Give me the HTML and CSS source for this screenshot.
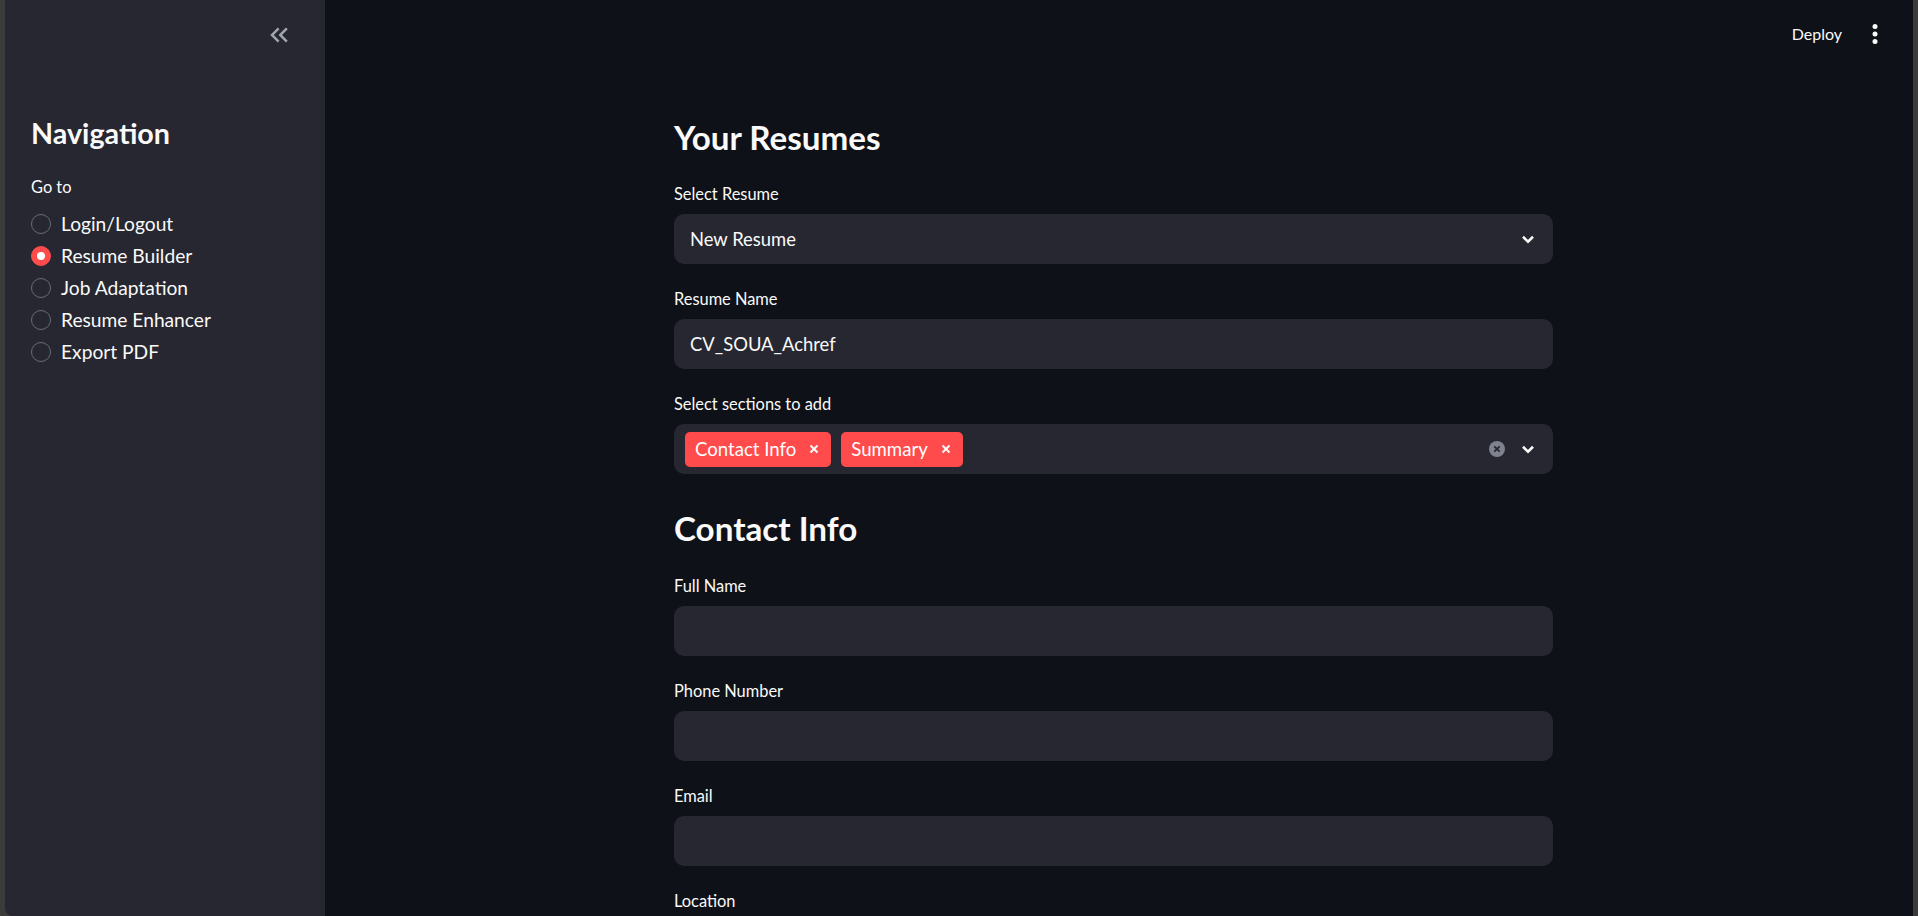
FILE: index.html
```html
<!DOCTYPE html>
<html lang="en">
<head>
<meta charset="utf-8">
<title>Resume Builder</title>
<link rel="stylesheet" href="styles.css">
</head>
<body>
<div class="window">
  <aside class="sidebar">
    <div class="sidebar-top">
      <button class="collapse-btn" aria-label="Collapse sidebar">
        <svg width="30" height="30" viewBox="0 0 24 24"><path d="M17.59 18L19 16.59 14.42 12 19 7.41 17.59 6l-6 6z M11 18l1.41-1.41L7.83 12l4.58-4.59L11 6l-6 6z" fill="currentColor"/></svg>
      </button>
    </div>
    <div class="sidebar-body">
      <h2 class="side-title">Navigation</h2>
      <div class="side-label">Go to</div>
      <ul class="radio-list">
        <li class="radio"><span class="dot"></span><span>Login/Logout</span></li>
        <li class="radio selected"><span class="dot"></span><span>Resume Builder</span></li>
        <li class="radio"><span class="dot"></span><span>Job Adaptation</span></li>
        <li class="radio"><span class="dot"></span><span>Resume Enhancer</span></li>
        <li class="radio"><span class="dot"></span><span>Export PDF</span></li>
      </ul>
    </div>
  </aside>
  <main class="main">
    <header class="topbar">
      <span class="deploy">Deploy</span>
      <span class="menu-btn">
        <svg width="30" height="30" viewBox="0 0 24 24"><circle cx="12" cy="6" r="2" fill="currentColor"/><circle cx="12" cy="12" r="2" fill="currentColor"/><circle cx="12" cy="18" r="2" fill="currentColor"/></svg>
      </span>
    </header>
    <section class="content">
      <h3 class="heading">Your Resumes</h3>
      <div class="field">
        <div class="label">Select Resume</div>
        <div class="box select">
          <span class="value">New Resume</span>
          <svg class="chev" width="14" height="9" viewBox="0 0 14 9"><path d="M2 1.8 L7 6.6 L12 1.8" fill="none" stroke="currentColor" stroke-width="2.6"/></svg>
        </div>
      </div>
      <div class="field">
        <div class="label">Resume Name</div>
        <div class="box"><span class="value">CV_SOUA_Achref</span></div>
      </div>
      <div class="field">
        <div class="label">Select sections to add</div>
        <div class="box multi">
          <div class="tags">
            <span class="tag">Contact Info<svg class="tag-x" width="10" height="10" viewBox="0 0 10 10"><path d="M1.5 1.5 L8.5 8.5 M8.5 1.5 L1.5 8.5" stroke="currentColor" stroke-width="1.9"/></svg></span>
            <span class="tag">Summary<svg class="tag-x" width="10" height="10" viewBox="0 0 10 10"><path d="M1.5 1.5 L8.5 8.5 M8.5 1.5 L1.5 8.5" stroke="currentColor" stroke-width="1.9"/></svg></span>
          </div>
          <div class="multi-icons">
            <svg class="clear" width="16" height="16" viewBox="0 0 16 16"><circle cx="8" cy="8" r="8" fill="#7f828f"/><path d="M5.3 5.3 L10.7 10.7 M10.7 5.3 L5.3 10.7" stroke="#262730" stroke-width="1.8"/></svg>
            <svg class="chev" width="14" height="9" viewBox="0 0 14 9"><path d="M2 1.8 L7 6.6 L12 1.8" fill="none" stroke="currentColor" stroke-width="2.6"/></svg>
          </div>
        </div>
      </div>
      <h3 class="heading second">Contact Info</h3>
      <div class="field">
        <div class="label">Full Name</div>
        <div class="box"></div>
      </div>
      <div class="field">
        <div class="label">Phone Number</div>
        <div class="box"></div>
      </div>
      <div class="field">
        <div class="label">Email</div>
        <div class="box"></div>
      </div>
      <div class="field">
        <div class="label">Location</div>
        <div class="box"></div>
      </div>
    </section>
  </main>
</div>
</body>
</html>
```
FILE: styles.css
```css
html, body {
  margin: 0;
  padding: 0;
  height: 916px;
  overflow: hidden;
  background: #3b3b3b;
  font-family: Lato, "Liberation Sans", sans-serif;
  color: #fafafa;
}

.window {
  display: flex;
  height: 916px;
  padding: 0 5px 0 5px;
  box-sizing: border-box;
  background: #3b3b3b;
}

.sidebar {
  width: 320px;
  flex: none;
  background: #262730;
  border-bottom-left-radius: 8px;
  display: flex;
  flex-direction: column;
}

.sidebar-top {
  height: 68px;
  display: flex;
  justify-content: flex-end;
  align-items: flex-start;
  padding: 20px 31px 0 0;
  box-sizing: border-box;
}

.collapse-btn {
  background: none;
  border: 0;
  padding: 0;
  margin: 0;
  width: 30px;
  height: 30px;
  color: #a3a5ad;
  display: block;
}

.collapse-btn svg { display: block; }

.sidebar-body {
  padding: 47px 26px 0 26px;
}

.side-title {
  margin: 0;
  font-size: 28.7px;
  line-height: 36px;
  font-weight: 700;
}

.side-label {
  margin-top: 24px;
  font-size: 16.4px;
  line-height: 24px;
}

.radio-list {
  list-style: none;
  margin: 9px 0 0 0;
  padding: 0;
}

.radio {
  height: 32px;
  display: flex;
  align-items: center;
  gap: 10px;
  font-size: 19.2px;
  line-height: 32px;
}

.dot {
  width: 20px;
  height: 20px;
  border-radius: 50%;
  border: 1px solid #6a6c75;
  box-sizing: border-box;
  flex: none;
  display: flex;
  align-items: center;
  justify-content: center;
}

.radio.selected .dot {
  background: #ff4b4b;
  border-color: #ff4b4b;
}

.radio.selected .dot::after {
  content: "";
  width: 8px;
  height: 8px;
  border-radius: 50%;
  background: #ffffff;
}

.main {
  flex: 1;
  background: #0e1117;
  display: flex;
  flex-direction: column;
  padding-right: 11px;
}

.topbar {
  height: 68px;
  display: flex;
  justify-content: flex-end;
  align-items: center;
  gap: 18px;
  padding-right: 12px;
  flex: none;
}

.deploy {
  font-size: 16px;
  line-height: 24px;
  color: #fafafa;
}

.menu-btn {
  width: 30px;
  height: 30px;
  color: #fafafa;
}

.menu-btn svg { display: block; }

.content {
  width: 879px;
  margin: 0 auto;
  padding-top: 47px;
}

.heading {
  margin: 0 0 20px 0;
  font-size: 33.2px;
  line-height: 44px;
  font-weight: 700;
}

.heading.second {
  margin-top: 32px;
  margin-bottom: 21px;
}

.field {
  margin-bottom: 20px;
}

.label {
  font-size: 16.4px;
  line-height: 30px;
  margin-bottom: 5px;
}

.box {
  height: 50px;
  background: #262730;
  border-radius: 10px;
  display: flex;
  align-items: center;
  padding: 0 16px;
  box-sizing: border-box;
}

.value {
  font-size: 18.4px;
  flex: 1;
}

.select .chev,
.multi .chev {
  color: #fafafa;
  display: block;
}

.select {
  padding-right: 18px;
}

.multi {
  padding: 0 18px 0 11px;
}

.tags {
  flex: 1;
  display: flex;
  gap: 10px;
}

.tag {
  height: 35px;
  background: #ff4b4b;
  border-radius: 5px;
  display: flex;
  align-items: center;
  padding: 0 12px 0 10px;
  font-size: 18.6px;
  color: #ffffff;
}

.tag-x {
  margin-left: 13px;
  display: block;
}

.multi-icons {
  display: flex;
  align-items: center;
  gap: 16px;
}

.clear { display: block; }
```
